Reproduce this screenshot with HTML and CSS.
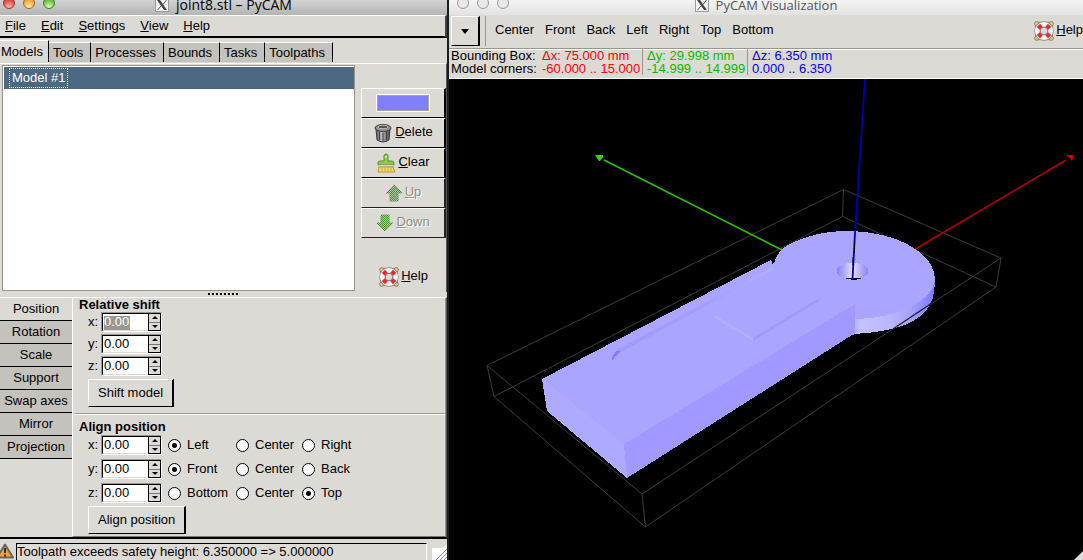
FILE: index.html
```
<!DOCTYPE html>
<html lang="en">
<head>
  <meta charset="UTF-8">
  <meta name="viewport" content="width=device-width, initial-scale=1.0">
  <title>PyCAM</title>
  <link rel="stylesheet" href="styles.css">
</head>
<body>

  <svg class="defs" width="0" height="0">
    <defs>
      <pattern id="dither" width="2" height="2" patternUnits="userSpaceOnUse">
        <rect width="2" height="2" fill="#a9c498"/>
        <rect width="1" height="1" fill="#4c9a2a"/>
        <rect x="1" y="1" width="1" height="1" fill="#4c9a2a"/>
      </pattern>
      <pattern id="dither-dark" width="2" height="2" patternUnits="userSpaceOnUse">
        <rect width="2" height="2" fill="#b4c2a8"/>
        <rect width="1" height="1" fill="#4d7a3a"/>
        <rect x="1" y="1" width="1" height="1" fill="#4d7a3a"/>
      </pattern>
      <linearGradient id="metal">
        <stop offset="0" stop-color="#555"/>
        <stop offset="0.4" stop-color="#bbb"/>
        <stop offset="1" stop-color="#484848"/>
      </linearGradient>
      <symbol id="lifebuoy" viewBox="0 0 18 18">
        <rect x="1.5" y="1.5" width="15" height="15" rx="3" fill="none" stroke="#b59a68" stroke-width="1.5"/>
        <circle cx="2.5" cy="2.5" r="2" fill="#d8c090" stroke="#8c7448" stroke-width="0.7"/>
        <circle cx="15.5" cy="2.5" r="2" fill="#d8c090" stroke="#8c7448" stroke-width="0.7"/>
        <circle cx="2.5" cy="15.5" r="2" fill="#d8c090" stroke="#8c7448" stroke-width="0.7"/>
        <circle cx="15.5" cy="15.5" r="2" fill="#d8c090" stroke="#8c7448" stroke-width="0.7"/>
        <circle cx="9" cy="9" r="6" fill="none" stroke="#8a8a8a" stroke-width="5.4"/>
        <circle cx="9" cy="9" r="6" fill="none" stroke="#f6f6f6" stroke-width="4.2"/>
        <path d="M2.500 5.500l3-3L8.500 6 6 8.500zM15.500 5.500l-3-3L9.500 6 12 8.500zM2.500 12.500l3 3L8.500 12 6 9.500zM15.500 12.500l-3 3L9.500 12 12 9.500z" fill="#f0252b"/>
        <circle cx="9" cy="9" r="3.400" fill="#dcdad5" stroke="#777" stroke-width="0.8"/>
      </symbol>
      <symbol id="x11" viewBox="0 0 14 14">
        <rect x="0.5" y="0.5" width="13" height="13" fill="#f4f4f4" stroke="#9a9a9a"/>
        <path d="M2 2h3l7 10H9z" fill="#444"/>
        <path d="M11.500 2L8 6.500M6 8L2.500 12" stroke="#555" stroke-width="1"/>
      </symbol>
    </defs>
  </svg>

  <div class="window main-window">
    <header class="titlebar">
      <div class="lights">
        <span class="light red"></span>
        <span class="light amber"></span>
        <span class="light green"></span>
      </div>
      <div class="title"><svg width="14" height="14"><use href="#x11"/></svg>joint8.stl – PyCAM</div>
    </header>

    <nav class="menubar">
      <a href="#"><u>F</u>ile</a>
      <a href="#"><u>E</u>dit</a>
      <a href="#"><u>S</u>ettings</a>
      <a href="#"><u>V</u>iew</a>
      <a href="#"><u>H</u>elp</a>
    </nav>

    <div class="tabs">
      <button class="tab active">Models</button>
      <button class="tab">Tools</button>
      <button class="tab">Processes</button>
      <button class="tab">Bounds</button>
      <button class="tab">Tasks</button>
      <button class="tab">Toolpaths</button>
    </div>

    <section class="models">
      <ul class="model-list">
        <li><span>Model #1</span></li>
      </ul>
      <div class="model-buttons">
        <button class="btn" aria-label="Model color"><span class="swatch"></span></button>
        <button class="btn">
          <svg width="20" height="20" viewBox="0 0 20 20">
            <path d="M3 6l1 11q6 4 12 0l1-11z" fill="url(#metal)" stroke="#3c3c3c"/>
            <path d="M6.500 9v8M10 10v8M13.500 9v8" stroke="#444"/>
            <ellipse cx="10" cy="5" rx="8" ry="3.500" fill="#8f8f8f" stroke="#3c3c3c"/>
            <ellipse cx="10" cy="4" rx="5" ry="1.800" fill="#555" stroke="#bbb"/>
          </svg>
          <span><u>D</u>elete</span>
        </button>
        <button class="btn">
          <svg width="20" height="20" viewBox="0 0 20 20">
            <path d="M8 8V3q0-2 2-2t2 2v5h4q2 0 2 2v2H2v-2q0-2 2-2z" fill="#8fc84c" stroke="#5e8f2a"/>
            <path d="M2.500 12h15v1.500h-15z" fill="#eee" stroke="#999" stroke-width="0.500"/>
            <path d="M3 14h14l2 5H2z" fill="#f3dc68" stroke="#b8982c"/>
            <path d="M6 15v3M9 15v3M12 15v3M15 15v3" stroke="#c9a93a"/>
            <circle cx="10" cy="4" r="1" fill="#eaf6d8"/>
          </svg>
          <span><u>C</u>lear</span>
        </button>
        <button class="btn" disabled>
          <svg width="18" height="18" viewBox="0 0 18 18">
            <path d="M9 1l8 8h-4v8H5V9H1z" fill="url(#dither)" stroke="url(#dither-dark)"/>
          </svg>
          <span><u>U</u>p</span>
        </button>
        <button class="btn" disabled>
          <svg width="18" height="18" viewBox="0 0 18 18">
            <path d="M9 17l8-8h-4V1H5v8H1z" fill="url(#dither)" stroke="url(#dither-dark)"/>
          </svg>
          <span><u>D</u>own</span>
        </button>
        <button class="btn flat help">
          <svg width="20" height="20"><use href="#lifebuoy"/></svg>
          <span><u>H</u>elp</span>
        </button>
      </div>
    </section>

    <div class="handle"></div>

    <section class="transform">
      <div class="side-tabs">
        <button class="side-tab active">Position</button>
        <button class="side-tab">Rotation</button>
        <button class="side-tab">Scale</button>
        <button class="side-tab">Support</button>
        <button class="side-tab">Swap axes</button>
        <button class="side-tab">Mirror</button>
        <button class="side-tab">Projection</button>
      </div>

      <div class="panel">
        <form class="group">
          <h2>Relative shift</h2>
          <div class="row">
            <label for="shift-x">x:</label>
            <div class="spin"><input type="text" id="shift-x" class="selected" value="0.00"><span class="arrows"><button type="button" aria-label="Up"></button><button type="button" aria-label="Down"></button></span></div>
          </div>
          <div class="row">
            <label for="shift-y">y:</label>
            <div class="spin"><input type="text" id="shift-y" value="0.00"><span class="arrows"><button type="button" aria-label="Up"></button><button type="button" aria-label="Down"></button></span></div>
          </div>
          <div class="row">
            <label for="shift-z">z:</label>
            <div class="spin"><input type="text" id="shift-z" value="0.00"><span class="arrows"><button type="button" aria-label="Up"></button><button type="button" aria-label="Down"></button></span></div>
          </div>
          <button type="button" class="btn action">Shift model</button>
        </form>

        <form class="group align">
          <h2>Align position</h2>
          <div class="row">
            <label for="align-x">x:</label>
            <div class="spin"><input type="text" id="align-x" value="0.00"><span class="arrows"><button type="button" aria-label="Up"></button><button type="button" aria-label="Down"></button></span></div>
            <label class="choice"><input type="radio" name="ax" checked>Left</label>
            <label class="choice"><input type="radio" name="ax">Center</label>
            <label class="choice"><input type="radio" name="ax">Right</label>
          </div>
          <div class="row">
            <label for="align-y">y:</label>
            <div class="spin"><input type="text" id="align-y" value="0.00"><span class="arrows"><button type="button" aria-label="Up"></button><button type="button" aria-label="Down"></button></span></div>
            <label class="choice"><input type="radio" name="ay" checked>Front</label>
            <label class="choice"><input type="radio" name="ay">Center</label>
            <label class="choice"><input type="radio" name="ay">Back</label>
          </div>
          <div class="row">
            <label for="align-z">z:</label>
            <div class="spin"><input type="text" id="align-z" value="0.00"><span class="arrows"><button type="button" aria-label="Up"></button><button type="button" aria-label="Down"></button></span></div>
            <label class="choice"><input type="radio" name="az">Bottom</label>
            <label class="choice"><input type="radio" name="az">Center</label>
            <label class="choice"><input type="radio" name="az" checked>Top</label>
          </div>
          <button type="button" class="btn action">Align position</button>
        </form>
      </div>
    </section>

    <footer class="statusbar">
      <svg width="15" height="16" viewBox="0 0 15 16">
        <path d="M5 1.500L13 14.500H-3z" fill="#f8a035" stroke="#666660" stroke-width="2" stroke-linejoin="round"/>
        <path d="M5 5v5M5 11.500v2" stroke="#222" stroke-width="1.800"/>
      </svg>
      <p>Toolpath exceeds safety height: 6.350000 =&gt; 5.000000</p>
      <svg class="grip" width="15" height="15" viewBox="0 0 15 15">
        <path d="M0 3h10l5-3v15H0z" fill="#fff"/>
        <path d="M4 15L15 4M8 15l7-7M12 15l3-3" stroke="#888"/>
      </svg>
    </footer>
  </div>

  <div class="window view-window">
    <header class="titlebar inactive">
      <div class="lights">
        <span class="light"></span>
        <span class="light"></span>
        <span class="light"></span>
      </div>
      <div class="title"><svg width="14" height="14"><use href="#x11"/></svg>PyCAM Visualization</div>
    </header>

    <div class="toolbar">
      <button class="btn dropdown" aria-label="View options"></button>
      <div class="views">
        <button>Center</button>
        <button>Front</button>
        <button>Back</button>
        <button>Left</button>
        <button>Right</button>
        <button>Top</button>
        <button>Bottom</button>
      </div>
      <button class="btn flat help">
        <svg width="20" height="20"><use href="#lifebuoy"/></svg>
        <span><u>H</u>elp</span>
      </button>
    </div>

    <div class="dimensions">
      <div class="names">Bounding Box:<br>Model corners:</div>
      <div class="dim dim-x">Δx: 75.000 mm<br>-60.000 .. 15.000</div>
      <div class="dim dim-y">Δy: 29.998 mm<br>-14.999 .. 14.999</div>
      <div class="dim dim-z">Δz: 6.350 mm<br>0.000 .. 6.350</div>
    </div>

    <div class="canvas">
      <svg viewBox="449 79 634 481" preserveAspectRatio="xMidYMin slice">
        <defs>
          <linearGradient id="rim">
            <stop offset="0" stop-color="#b0abff"/>
            <stop offset="0.100" stop-color="#c5c1ff"/>
            <stop offset="0.450" stop-color="#bbb7ff"/>
            <stop offset="0.700" stop-color="#a7a1ff"/>
            <stop offset="1" stop-color="#7f78ff"/>
          </linearGradient>
          <linearGradient id="hole">
            <stop offset="0" stop-color="#8880f0"/>
            <stop offset="0.250" stop-color="#b0abff"/>
            <stop offset="0.500" stop-color="#e4e2ff"/>
            <stop offset="0.750" stop-color="#b4afff"/>
            <stop offset="1" stop-color="#8880f0"/>
          </linearGradient>
          <linearGradient id="slot">
            <stop offset="0" stop-color="#a099ff"/>
            <stop offset="0.600" stop-color="#a49eff"/>
            <stop offset="1" stop-color="#b2adff"/>
          </linearGradient>
        </defs>

        <!-- bounding box -->
        <g fill="none" stroke="#3c3c3c">
          <path d="M843.500 189.500L487 365.500 642 494 1001 258z"/>
          <path d="M842.500 216.500L494 396.500 645.500 527 996 287z"/>
          <path d="M843.500 189.500l-1 27M487 365.500l7 31M642 494l3.500 33M1001 258l-5 29"/>
        </g>

        <!-- x and y axis -->
        <path d="M912 251L1066 160" stroke="#b80000" stroke-width="1.500"/>
        <path d="M1066 155h7v4l-2 2v-2z" fill="#d00000"/>
        <path d="M604 160L784 251" stroke="#28c400" stroke-width="1.500"/>
        <path d="M595 155h8v2l-3 4h-1z" fill="#32d600"/>

        <!-- model -->
        <g shape-rendering="crispEdges">
          <path d="M852 318L880 316 920 300 935 275V283L933 298Q930 306 924 313 913 323 896 328 876 333 852 334z" fill="url(#rim)"/>
          <path d="M542 379L771 260 773 263 774 263Q777 252 788 245 815 231 848 231 888 232 912 247 935 261 935 280C934 300 897 319 855 319V304L624 444z" fill="#aaa5ff"/>
          <path d="M771 260l3-1-1 6z" fill="#000"/>
          <path d="M542 379l5 32 80 67-3-34z" fill="#aeaaff"/>
          <path d="M624 444L855 304v30l-3 1L627 478z" fill="#a199ff"/>
          <path d="M612 360Q612 352 620 348L773 267v3L621 352 613 361z" fill="url(#slot)"/>
          <path d="M612 360q0-5 5-9l3 0-6 6-1 4z" fill="#837bf6"/>
          <path d="M715 315l38 23v3l-38-23z" fill="#b2adff"/>
          <path d="M753 338l66-40v3l-66 40z" fill="#a099ff"/>
          <ellipse cx="852.500" cy="271" rx="16" ry="8" fill="url(#hole)"/>
          <path d="M843 278h20l-6 1.500h-6z" fill="#000"/>
        </g>
        <path d="M893 329L932 303" stroke="#1c1c26" stroke-width="1.300"/>

        <!-- z axis -->
        <path d="M865 79L855 233 852.500 279" fill="none" stroke="#0000b8" stroke-width="1.800"/>
        <path d="M854.500 241v12M853 257v8" stroke="#000"/>
        <path d="M1074 560l9-9v9z" fill="#ddd"/>
      </svg>
    </div>
  </div>

</body>
</html>
```
FILE: styles.css
```
* {
  margin: 0;
  padding: 0;
  box-sizing: border-box;
}

body {
  display: flex;
  height: 100vh;
  overflow: hidden;
  background: #000;
  font-family: "Liberation Sans", Arial, sans-serif;
  font-size: 13px;
  line-height: 16px;
  color: #000;
}

button,
input {
  font: inherit;
  color: inherit;
}

button {
  border: none;
  background: none;
}

svg {
  flex: none;
}

.defs {
  position: absolute;
}

.window {
  display: flex;
  flex-direction: column;
  min-width: 0;
  background: #dcdad5;
}

.main-window {
  flex: 0 0 449px;
  border-right: 2px solid #10201c;
}

.view-window {
  flex: 1;
}

/* Title bars */
.titlebar {
  flex: none;
  display: grid;
  grid-template-columns: 1fr auto 1fr;
  grid-template-rows: 10px;
  height: 15px;
  background: linear-gradient(#d2d2d2, #b4b4b4);
}

.titlebar.inactive {
  background: linear-gradient(#f4f4f4, #e2e2e2);
  color: #555;
}

.lights {
  display: flex;
  gap: 8px;
  margin-top: -3px;
  padding-left: 3px;
}

.inactive .lights {
  padding-left: 8px;
}

.light {
  width: 12px;
  height: 12px;
  border: 1px solid #999;
  border-radius: 50%;
  background: #e8e8e8;
}

.red {
  background: radial-gradient(circle at 50% 90%, #ffb8b0, #e0443e 70%);
  border-color: #8c3a36;
}

.amber {
  background: radial-gradient(circle at 50% 90%, #fff0a0, #eda33a 70%);
  border-color: #96682c;
}

.green {
  background: radial-gradient(circle at 50% 90%, #d8ffb0, #6cb93f 70%);
  border-color: #4b7a34;
}

.title {
  display: flex;
  align-items: center;
  gap: 7px;
  font-family: "Open Sans", sans-serif;
  font-size: 14px;
  line-height: 10px;
}

.inactive .title {
  font-size: 13px;
}

/* Menu and tabs */
.menubar {
  flex: none;
  display: flex;
  gap: 15px;
  height: 23px;
  padding: 2px 5px;
  border-top: 1px solid #fff;
  border-right: 2px solid #444;
  border-bottom: 2px solid #000;
}

.menubar a {
  color: #000;
  text-decoration: none;
}

.tabs {
  flex: none;
  display: flex;
  align-items: flex-end;
  height: 25px;
  padding-top: 3px;
}

.tab {
  height: 20px;
  margin-bottom: 1px;
  padding: 0 6px 0 4px;
  border-top: 1px solid #fff;
  border-right: 1px solid #000;
  background: #c4c2bd;
}

.tab + .tab {
  padding-right: 7px;
}

.tab.active {
  height: 22px;
  padding: 0 5px 0 1px;
  background: #dcdad5;
}

/* Model list */
.models {
  flex: 1;
  display: flex;
  gap: 6px;
  min-height: 0;
  border-top: 1px solid #fff;
  border-right: 1px solid #555;
}

.model-list {
  flex: 1;
  margin: 1px 0 1px 2px;
  padding: 1px 0 0 1px;
  list-style: none;
  background: #fff;
  border: 1px solid #9a968c;
}

.model-list li {
  display: flex;
  height: 22px;
  padding: 1px 5px;
  background: #4b6983;
  color: #fff;
}

.model-list span {
  height: 20px;
  padding: 0 2px;
  border: 1px dotted #fff;
  line-height: 17px;
}

.model-buttons {
  flex: 0 0 85px;
  display: flex;
  flex-direction: column;
  padding-top: 24px;
}

.btn {
  flex: none;
  display: flex;
  align-items: center;
  justify-content: center;
  gap: 2px;
  height: 30px;
  border: 1px solid #fff;
  border-right: 2px solid #000;
  border-bottom: 1px solid #000;
}

.btn span {
  padding-bottom: 2px;
}

.btn:disabled {
  border-right-color: #222;
  border-bottom-color: #222;
  color: #8f8c85;
  text-shadow: 1px 1px 0 #fff;
}

.btn.flat {
  border: none;
}

.btn .swatch {
  width: 54px;
  height: 18px;
  border: 1px solid #fff;
  outline: 1px solid #a8a498;
  outline-offset: -2px;
  background: #8080ff;
}

.model-buttons .help {
  margin-top: 24px;
}

.handle {
  flex: none;
  width: 32px;
  height: 2px;
  margin: 1px auto 2px;
  background: repeating-linear-gradient(90deg, #000 0 2px, #fff 2px 3px, transparent 3px 4px);
}

/* Transformations */
.transform {
  flex: none;
  display: flex;
  border-top: 1px solid #fff;
  border-right: 1px solid #555;
  border-bottom: 2px solid #000;
}

.side-tabs {
  flex: 0 0 72px;
  display: flex;
  flex-direction: column;
}

.side-tab {
  height: 23px;
  padding-bottom: 1px;
  border-bottom: 1px solid #000;
  background: #c4c2bd;
}

.side-tab.active {
  background: #dcdad5;
}

.panel {
  flex: 1;
  border-left: 1px solid #fff;
  border-right: 1px solid #9a968c;
  border-bottom: 1px solid #777;
}

.group {
  height: 115px;
  padding: 0 6px 0 15px;
}

.align {
  height: auto;
  margin-left: 2px;
  padding: 6px 6px 2px 13px;
  border-top: 1px solid #9a968c;
  box-shadow: inset 0 1px 0 #fff;
}

h2 {
  margin-left: -9px;
  font-size: 13px;
  line-height: 13px;
}

.row {
  display: grid;
  grid-template-columns: 13px 61px 6px 68px 66px 1fr;
  align-items: center;
  height: 22px;
}

.align .row {
  height: 24px;
}

.row .choice:nth-child(3) {
  grid-column: 4;
}

.spin {
  display: flex;
  height: 20px;
  border: 1px solid #9a968c;
  border-right-color: #fff;
  border-bottom-color: #fff;
}

.spin input {
  width: 46px;
  padding: 0 1px 1px;
  border: 1px solid #000;
  border-right: none;
  border-bottom-color: #dcdad5;
  outline: none;
  background: #fff;
}

.spin .selected {
  background: linear-gradient(#9a988f, #9a988f) 1px 2px / 26px 14px no-repeat #fff;
  color: #fff;
}

.arrows {
  flex: 1;
  display: flex;
  flex-direction: column;
  border: 1px solid #000;
}

.arrows button {
  flex: 1;
  display: flex;
  align-items: center;
  justify-content: center;
}

.arrows button + button {
  border-top: 1px solid #777;
}

.arrows button::before {
  content: "";
  border: 3px solid transparent;
  border-top: none;
  border-bottom: 3px solid #000;
}

.arrows button + button::before {
  border-top: 3px solid #000;
  border-bottom: none;
}

.choice {
  display: flex;
  align-items: center;
  gap: 6px;
}

.choice input {
  appearance: none;
  width: 13px;
  height: 13px;
  border: 1px solid #000;
  border-radius: 50%;
  background: #fff;
}

.choice input:checked {
  background: radial-gradient(circle, #000 0 2px, #fff 3px);
}

.action {
  height: 28px;
  margin-top: 2px;
  padding: 0 9px;
}

.align .action {
  margin-top: 1px;
}

.statusbar {
  flex: none;
  display: flex;
  gap: 1px;
  height: 21px;
  padding-top: 4px;
}

.statusbar p {
  flex: 1;
  height: 20px;
  margin-right: 4px;
  border: 1px solid #000;
  border-right-color: #fff;
}

.grip {
  align-self: flex-end;
}

/* Visualization window */
.toolbar {
  flex: none;
  display: flex;
  height: 33px;
  padding: 1px 0 2px 2px;
}

.dropdown {
  width: 29px;
}

.dropdown::before {
  content: "";
  border: 4px solid transparent;
  border-top: 5px solid #000;
  border-bottom: none;
}

.views {
  flex: 1;
  display: flex;
  gap: 11px;
  margin-left: 5px;
  padding: 0 0 3px 9px;
  border-left: 1px solid #9a968c;
}

.toolbar .help {
  gap: 2px;
}

.dimensions {
  flex: none;
  display: flex;
  height: 31px;
  padding: 0 0 2px 2px;
  border-top: 1px solid #9a968c;
  border-bottom: 1px solid #fff;
  box-shadow: inset 0 1px 0 #fff;
  line-height: 13px;
  white-space: nowrap;
}

.names {
  flex: 0 0 91px;
}

.dim {
  height: 26px;
  margin-right: 4px;
}

.dim-x {
  flex: 0 0 101px;
  border-right: 1px solid #9a968c;
  color: #f00;
}

.dim-y {
  flex: 0 0 101px;
  border-right: 1px solid #9a968c;
  color: #00c000;
}

.dim-z {
  color: #00f;
}

.canvas {
  flex: 1;
  min-height: 0;
  background: #000;
}

.canvas svg {
  display: block;
  width: 100%;
  height: 100%;
}
```
